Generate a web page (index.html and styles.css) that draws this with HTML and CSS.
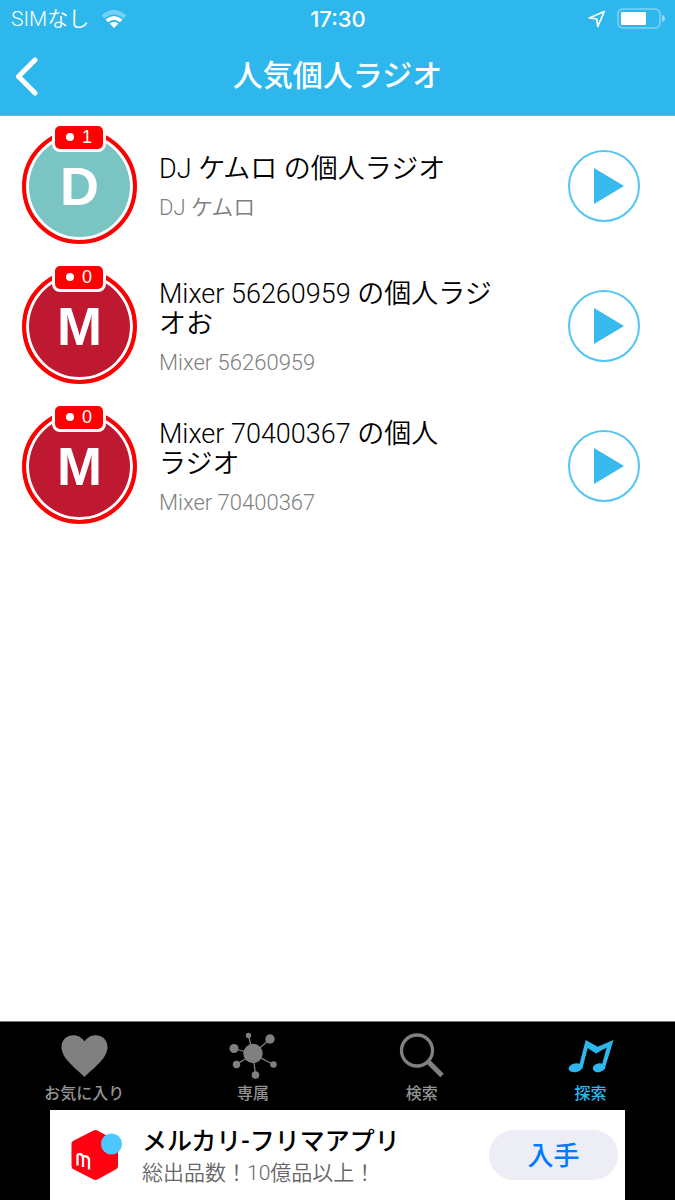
FILE: index.html
```html
<!DOCTYPE html>
<html lang="ja">
<head>
<meta charset="utf-8">
<meta name="viewport" content="width=device-width, initial-scale=1">
<title>人気個人ラジオ</title>
<link rel="stylesheet" href="styles.css">
</head>
<body>
<header class="top">
  <div class="status">
    <div class="carrier">
      <span>SIMなし</span>
      <svg class="wifi" viewBox="0 0 26 20" width="26" height="20" aria-hidden="true">
        <path d="M.500 6.500Q13-4.500 25.500 6.500L22.500 9.500Q13 1.500 3.500 9.500Z" fill="#fff" opacity=".35"/>
        <path d="M4.500 10.500Q13 3.500 21.500 10.500L19 13.200Q13 8.200 7 13.200Z" fill="#fff"/>
        <path d="M8.500 14.500Q13 11 17.500 14.500L13 19Z" fill="#fff"/>
      </svg>
    </div>
    <time class="clock">17:30</time>
    <div class="indicators">
      <svg viewBox="0 0 18 18" width="18" height="18" aria-hidden="true"><path d="M16.300 1.500 1.300 8 8.800 9 9.800 16.500Z" fill="none" stroke="#fff" stroke-width="1.700" stroke-linejoin="round"/></svg>
      <svg viewBox="0 0 48 22" width="48" height="22" aria-hidden="true">
        <rect x="1" y="1" width="42" height="19" rx="5" fill="none" stroke="#fff" stroke-width="1.500" opacity=".4"/>
        <rect x="4" y="4" width="25" height="13" rx="1" fill="#fff"/>
        <path d="M45 7Q48 8 48 10.500T45 14Z" fill="#fff" opacity=".5"/>
      </svg>
    </div>
  </div>
  <div class="nav">
    <button class="back" type="button" aria-label="戻る">
      <svg viewBox="0 0 24 40" width="24" height="40" aria-hidden="true"><path d="M20 4 3.500 20.500 20 37" fill="none" stroke="#fff" stroke-width="5" stroke-linecap="round" stroke-linejoin="round"/></svg>
    </button>
    <h1 class="title">人気個人ラジオ</h1>
  </div>
</header>

<main class="stations">
  <article class="station">
    <div class="avatar avatar-teal">D<span class="live">1</span></div>
    <div class="info">
      <h2 class="name">DJ ケムロ の個人ラジオ</h2>
      <p class="owner">DJ ケムロ</p>
    </div>
    <button class="play" type="button" aria-label="再生"><svg viewBox="0 0 30 36" width="30" height="36" aria-hidden="true"><path d="M0 0 30 18 0 36Z" fill="#38b9ef"/></svg></button>
  </article>
  <article class="station">
    <div class="avatar">M<span class="live">0</span></div>
    <div class="info">
      <h2 class="name">Mixer 56260959 の個人ラジ<br>オお</h2>
      <p class="owner">Mixer 56260959</p>
    </div>
    <button class="play" type="button" aria-label="再生"><svg viewBox="0 0 30 36" width="30" height="36" aria-hidden="true"><path d="M0 0 30 18 0 36Z" fill="#38b9ef"/></svg></button>
  </article>
  <article class="station">
    <div class="avatar">M<span class="live">0</span></div>
    <div class="info">
      <h2 class="name">Mixer 70400367 の個人<br>ラジオ</h2>
      <p class="owner">Mixer 70400367</p>
    </div>
    <button class="play" type="button" aria-label="再生"><svg viewBox="0 0 30 36" width="30" height="36" aria-hidden="true"><path d="M0 0 30 18 0 36Z" fill="#38b9ef"/></svg></button>
  </article>
</main>

<footer class="bottom">
  <nav class="tabs">
    <a class="tab" href="#favorites">
      <svg viewBox="0 0 48 48" width="48" height="48" aria-hidden="true"><path d="M24.500 46C17 38 1.500 28 1.500 16C1.500 3 18 0 24.500 10.500C31 0 47.500 3 47.500 16C47.500 28 32 38 24.500 46Z" fill="#808080"/></svg>
      <span>お気に入り</span>
    </a>
    <a class="tab" href="#exclusive">
      <svg viewBox="0 0 48 48" width="48" height="48" aria-hidden="true">
        <path d="M24 23 19.500 4.500M24 23 41 8M24 23 5 17.500M24 23 7.500 33.500M24 23 26.500 44M24 23 44.500 33.500" stroke="#808080" stroke-width="1.300"/>
        <g fill="#808080"><circle cx="24" cy="22.500" r="9.700"/><circle cx="19.500" cy="4.500" r="2.700"/><circle cx="41" cy="8" r="4.700"/><circle cx="5" cy="17.500" r="4.500"/><circle cx="7.500" cy="33.500" r="3.700"/><circle cx="26.500" cy="44" r="3.800"/><circle cx="44.500" cy="33.500" r="3.200"/></g>
      </svg>
      <span>専属</span>
    </a>
    <a class="tab" href="#search">
      <svg viewBox="0 0 48 48" width="48" height="48" aria-hidden="true"><circle cx="19" cy="19.500" r="15.500" fill="none" stroke="#808080" stroke-width="3.300"/><path d="m30 30.500 14 14" stroke="#808080" stroke-width="5"/></svg>
      <span>検索</span>
    </a>
    <a class="tab tab-active" href="#explore" aria-current="page">
      <svg viewBox="0 0 48 48" width="48" height="48" aria-hidden="true"><g fill="#2db7ed"><path d="M18.700 9 30.700 15.700 46.500 9 37.700 38 34.300 36 39.700 16.500 29 22.500 20.700 17 15.300 38 11.700 36Z"/><ellipse cx="8.500" cy="36.700" rx="7" ry="4.400" transform="rotate(-12 8.500 36.700)"/><ellipse cx="32" cy="36.700" rx="6.300" ry="4.400" transform="rotate(-12 32 36.700)"/></g></svg>
      <span>探索</span>
    </a>
  </nav>
  <aside class="ad">
    <svg class="ad-logo" viewBox="0 0 52 52" width="52" height="52" aria-hidden="true">
      <path d="M22 1.700Q24.500.300 27 1.700L45.500 12Q47 13 47 15V37Q47 39 45.500 40L27 50.300Q24.500 51.700 22 50.300L2 40Q.500 39 .500 37V15Q.500 13 2 12Z" fill="#ff0211"/>
      <circle cx="40.500" cy="15" r="10.500" fill="#4dc9ff"/>
      <path d="M6.500 36.500V27Q6.500 24.500 9.500 25.200Q12 26 12 29V38M12 29Q12 26.300 15 27.300Q18 28.300 18 31V40.500" fill="none" stroke="#fff" stroke-width="2.300"/>
    </svg>
    <div class="ad-copy">
      <strong class="ad-title">メルカリ-フリマアプリ</strong>
      <span class="ad-text">総出品数！10億品以上！</span>
    </div>
    <button class="ad-button" type="button">入手</button>
  </aside>
</footer>
</body>
</html>
```

FILE: styles.css
```css
* { box-sizing: border-box; }

body {
  margin: 0;
  min-height: 100vh;
  display: flex;
  flex-direction: column;
  background: #fff;
  color: #000;
  font-family: Roboto, "Noto Sans CJK JP", sans-serif;
}

h1, h2, p { margin: 0; }

button {
  padding: 0;
  border: 0;
  background: none;
  font-family: inherit;
  cursor: pointer;
}

svg { display: block; }

.top {
  background: #2db7ed;
  border-bottom: 1px solid #8fabb7;
  color: #fff;
}

.status {
  height: 37px;
  padding: 0 10px 0 11px;
  display: grid;
  grid-template-columns: 1fr auto 1fr;
  align-items: center;
}

.carrier {
  display: flex;
  align-items: center;
  gap: 12px;
  font-size: 21px;
  font-weight: 350;
  line-height: 36px;
}

.clock {
  font-family: Inter, sans-serif;
  font-size: 22px;
  font-weight: 500;
}

.indicators {
  display: flex;
  justify-content: flex-end;
  align-items: center;
  gap: 11px;
}

.nav {
  height: 78px;
  padding: 0 15px;
  display: grid;
  grid-template-columns: 40px 1fr 40px;
  align-items: center;
}

.back { justify-self: start; }

.title {
  text-align: center;
  font-size: 30px;
  font-weight: 500;
  line-height: 40px;
}

.stations { flex: 1; }

.station {
  height: 140px;
  padding: 0 35px 0 22px;
  display: flex;
  align-items: center;
  gap: 22px;
}

.avatar {
  position: relative;
  flex: none;
  width: 115px;
  height: 115px;
  display: grid;
  place-items: center;
  border: 4px solid #f00;
  border-radius: 50%;
  background: #bf1931;
  box-shadow: inset 0 0 0 3px #fff;
  color: #fff;
  font-family: "Liberation Sans", sans-serif;
  font-size: 54px;
  font-weight: 700;
  line-height: 64px;
}

.avatar-teal { background: #7bc4c4; }

.live {
  position: absolute;
  top: -10px;
  left: 26px;
  width: 54px;
  height: 29px;
  display: flex;
  justify-content: center;
  align-items: center;
  gap: 8px;
  border: 3px solid #fff;
  border-radius: 8px;
  background: #f00;
  font-size: 18px;
  font-weight: 400;
  line-height: 22px;
}

.live::before {
  content: "";
  width: 8px;
  height: 8px;
  border-radius: 50%;
  background: #fff;
}

.info {
  flex: 1;
  min-width: 0;
  padding-top: 5px;
}

.name {
  font-size: 27px;
  font-weight: 350;
  line-height: 30px;
}

.owner {
  margin-top: 8px;
  color: #808080;
  font-size: 22px;
  font-weight: 350;
  line-height: 32px;
}

.play {
  flex: none;
  width: 72px;
  height: 72px;
  padding-left: 24px;
  border: 2px solid #52c5f5;
  border-radius: 50%;
}

.bottom {
  background: #000;
  border-top: 1px solid #777;
}

.tabs {
  height: 88px;
  display: grid;
  grid-template-columns: repeat(4, 1fr);
}

.tab {
  padding-top: 9px;
  display: flex;
  flex-direction: column;
  align-items: center;
  gap: 3px;
  color: #939393;
  font-size: 16px;
  font-weight: 500;
  line-height: 24px;
  text-decoration: none;
}

.tab-active { color: #2db7ed; }

.ad {
  height: 90px;
  margin: 0 50px;
  padding: 0 7px 0 21px;
  display: flex;
  align-items: center;
  gap: 19px;
  background: #fff;
}

.ad-copy {
  flex: 1;
  padding-top: 4px;
  display: flex;
  flex-direction: column;
}

.ad-title {
  font-size: 25px;
  font-weight: 500;
  line-height: 32px;
}

.ad-text {
  color: #666;
  font-size: 21px;
  font-weight: 350;
  line-height: 30px;
}

.ad-button {
  width: 129px;
  height: 50px;
  padding-bottom: 4px;
  border-radius: 25px;
  background: #ededf6;
  color: #007aff;
  font-size: 26px;
  font-weight: 500;
}
```
